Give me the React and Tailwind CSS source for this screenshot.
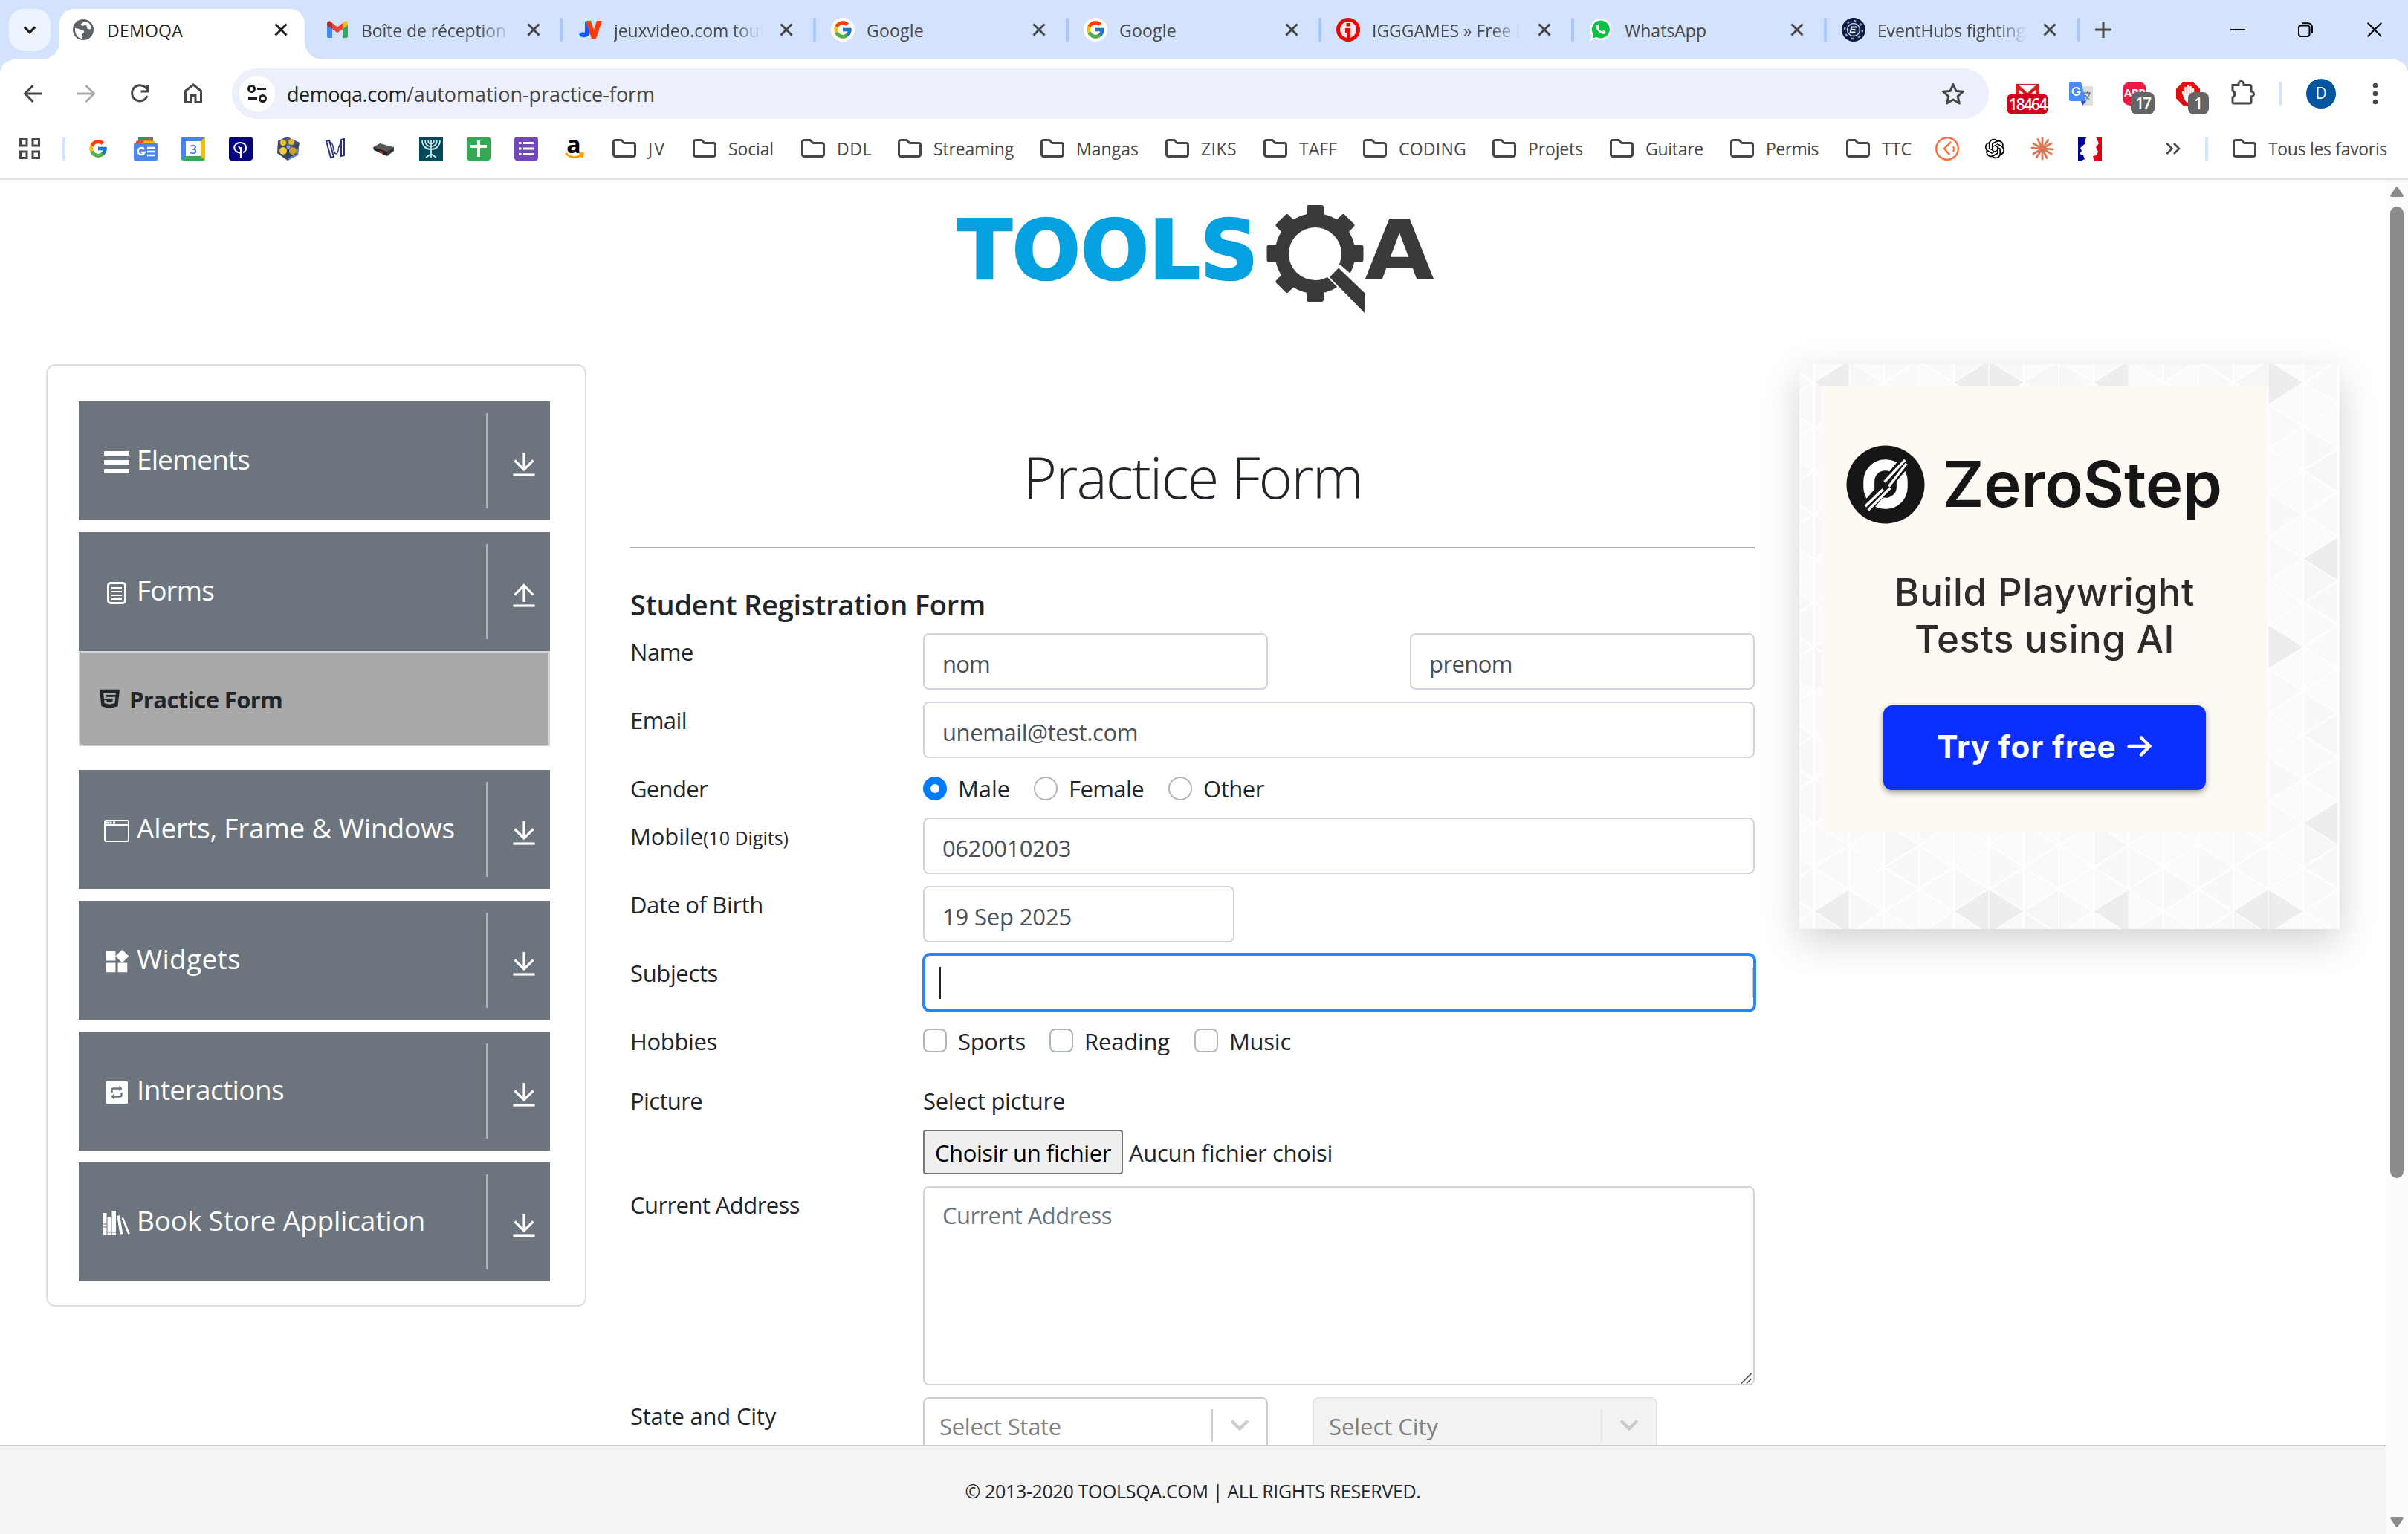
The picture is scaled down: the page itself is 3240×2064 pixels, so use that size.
import React, { useLayoutEffect, useRef, useState } from "react";
import { FcGoogle } from "react-icons/fc";
import { FaWhatsapp, FaHtml5 } from "react-icons/fa";
import { RiOpenaiFill } from "react-icons/ri";
import { MdWidgets } from "react-icons/md";

/* Text that is tracked so that it takes exactly `w` pixels. */
function T({ w, className = "", children }) {
  const ref = useRef(null);
  const [ls, setLs] = useState(0);
  useLayoutEffect(() => {
    const n = String(children).length;
    const fit = () => {
      const el = ref.current;
      if (!el || !w) return;
      el.style.letterSpacing = "0px";
      const v = (w - el.getBoundingClientRect().width) / n;
      el.style.letterSpacing = v + "px";
      setLs(v);
    };
    fit();
    if (document.fonts && document.fonts.ready) document.fonts.ready.then(fit);
  }, [w, children]);
  return (
    <span ref={ref} className={"inline-block whitespace-pre " + className} style={{ letterSpacing: ls + "px" }}>
      {children}
    </span>
  );
}

/* ---------- small icons ---------- */
const Close = ({ className = "" }) => (
  <svg viewBox="0 0 20 20" className={"h-5 w-5 shrink-0 " + className} fill="none" stroke="currentColor" strokeWidth="3">
    <path d="M2.500 2.500l15 15M17.500 2.500l-15 15" />
  </svg>
);
const Globe = () => (
  <svg viewBox="0 0 28 28" className="h-7 w-7 shrink-0">
    <circle cx="14" cy="14" r="14" fill="#5f6368" />
    <path d="M3 12c4 0 6 2 9 2 2 0 3 1 3 3s-3 2-3 4 1 3 1 5c-6 0-10.500-6-10-14zM15 3c-1 2-4 2-4 4s3 2 5 1 3 1 3 3 3 3 6 2c0-6-4-10-10-10z" fill="#fff" />
  </svg>
);
const Gmail = () => (
  <svg viewBox="0 0 32 32" className="h-8 w-8 shrink-0">
    <path d="M2 8v17a2 2 0 0 0 2 2h5V14z" fill="#4285f4" />
    <path d="M30 8v17a2 2 0 0 1-2 2h-5V14z" fill="#34a853" />
    <path d="M23 7v8l7-5V8c0-3-3-4.500-5.500-2.500z" fill="#fbbc04" />
    <path d="M9 15V7l7 5.500L23 7v8l-7 5.300z" fill="#ea4335" />
    <path d="M2 8v2l7 5V7L7.500 5.500C5 3.500 2 5 2 8z" fill="#c5221f" />
  </svg>
);
const JVIcon = () => (
  <svg viewBox="0 0 32 32" className="h-8 w-8 shrink-0">
    <path d="M9 5h7v13a8 8 0 0 1-15 4l5-3c2 2 3 1 3-1z" fill="#0a5cff" />
    <path d="M10 4h7l4 12 4-12h7l-8 24h-6z" fill="#ff3c00" />
  </svg>
);
const GoogleDisc = () => (
  <span className="flex h-8 w-8 shrink-0 items-center justify-center rounded-full bg-white">
    <FcGoogle className="h-7 w-7" />
  </span>
);
const Igg = () => (
  <svg viewBox="0 0 32 32" className="h-8 w-8 shrink-0">
    <circle cx="16" cy="16" r="13.500" fill="#f6e9f2" stroke="#f40000" strokeWidth="5" />
    <path d="M12 14h7v18h-5v-12h-2z" fill="#f40000" />
    <path d="M13.500 7h5v4.500h-5z" fill="#f40000" />
  </svg>
);
const Whats = () => (
  <svg viewBox="0 0 32 32" className="h-8 w-8 shrink-0">
    <path d="M16 1a14.500 14.500 0 1 1-7 27.200L1 31l2.500-7.500A14.500 14.500 0 0 1 16 1z" fill="#fff" />
    <path d="M16 3.500a12 12 0 1 1-6 22.500l-5.500 1.500L6 22.200A12 12 0 0 1 16 3.500z" fill="#0bc144" />
    <path d="M11 9.500c1-1 2-.6 2.400.5l.8 2c.3.9-1 1.600-1 2.300.8 2 2.700 3.500 4.400 4.200.7 0 1.200-1.700 2.100-1.400l2.300 1.200c.8.400.5 2.200-.5 2.900-3 2-11-2.600-11.700-8.300-.1-1.500.4-2.500 1.200-3.400z" fill="#fff" />
  </svg>
);
const Hubs = () => (
  <svg viewBox="0 0 32 32" className="h-8 w-8 shrink-0">
    <circle cx="16" cy="16" r="16" fill="#0d1b40" />
    <circle cx="16" cy="16" r="12" fill="none" stroke="#8ea2c8" strokeWidth="2.500" strokeDasharray="3 6.400" />
    <circle cx="16" cy="16" r="8.500" fill="#16264f" stroke="#c9d4ea" strokeWidth="1.500" />
    <path d="M20 12.500h-6.500l-1 3.500h6M12.500 16l-1 3.500h7" stroke="#e6ecf8" strokeWidth="1.800" fill="none" />
  </svg>
);
const Folder = () => (
  <svg viewBox="0 0 32 26" className="h-[26px] w-8 shrink-0" fill="none" stroke="#474747" strokeWidth="3">
    <path d="M1.500 4a2.500 2.500 0 0 1 2.500-2.500h8l4 4h12A2.500 2.500 0 0 1 30.500 8v13a2.500 2.500 0 0 1-2.500 2.500H4A2.500 2.500 0 0 1 1.500 21z" />
  </svg>
);

/* ---------- tab strip ---------- */
const tabs = [
  { t: "Boîte de réception", w: 195, icon: <Gmail />, fade: true },
  { t: "jeuxvideo.com tout", w: 204, icon: <JVIcon />, fade: true, sep: true },
  { t: "Google", w: 77, icon: <GoogleDisc />, sep: true },
  { t: "Google", w: 77, icon: <GoogleDisc />, sep: true },
  { t: "IGGGAMES » Free D", w: 210, icon: <Igg />, fade: true, sep: true },
  { t: "WhatsApp", w: 110, icon: <Whats />, sep: true },
  { t: "EventHubs fighting", w: 199, icon: <Hubs />, fade: true, sep: true },
];

function Tab({ t, w, icon, fade, sep }) {
  return (
    <div className="flex w-[340px] shrink-0 items-center">
      <span className={"h-8 w-1 rounded-full " + (sep ? "bg-[#a8c7fa]" : "")} />
      <span className="ml-5 flex">{icon}</span>
      <span
        className={
          "ml-4 w-[200px] overflow-hidden whitespace-nowrap pt-[2px] text-[23px] leading-8 text-[#474747] " +
          (fade ? "[mask-image:linear-gradient(to_right,black_80%,transparent)]" : "")
        }
      >
        <T w={w}>{t}</T>
      </span>
      <Close className="ml-[22px] text-[#474747]" />
    </div>
  );
}

function TabStrip() {
  return (
    <div className="flex h-20 items-stretch bg-[#d3e2fd]">
      <div className="ml-3 mt-3 flex h-14 w-14 shrink-0 items-center justify-center rounded-[20px] bg-[#ecf2fe]">
        <svg viewBox="0 0 20 12" className="h-3 w-[18px]" fill="none" stroke="#1f1f1f" strokeWidth="3.600">
          <path d="M2 2l8 8 8-8" />
        </svg>
      </div>
      <div className="relative ml-3 mt-3 flex w-[330px] shrink-0 items-center rounded-t-[20px] bg-white pb-3">
        <svg viewBox="0 0 24 24" className="absolute -left-6 bottom-0 h-6 w-6" fill="#fff"><path d="M24 0v24H0A24 24 0 0 0 24 0z" /></svg>
        <svg viewBox="0 0 24 24" className="absolute -right-6 bottom-0 h-6 w-6" fill="#fff"><path d="M0 0v24h24A24 24 0 0 1 0 0z" /></svg>
        <span className="ml-[18px]"><Globe /></span>
        <span className="ml-[18px] w-[224px] pt-[2px] text-[23px] leading-8 text-[#1f1f1f]"><T w={102}>DEMOQA</T></span>
        <Close className="text-[#1f1f1f]" />
      </div>
      <div className="ml-1 flex">
        {tabs.map((x, i) => <Tab key={i} {...x} />)}
      </div>
      <div className="flex grow items-center">
        <span className="h-8 w-1 rounded-full bg-[#a8c7fa]" />
        <svg viewBox="0 0 22 22" className="ml-[21px] h-[22px] w-[22px]" stroke="#474747" strokeWidth="3"><path d="M11 0v22M0 11h22" /></svg>
        <svg viewBox="0 0 20 20" className="ml-[160px] h-5 w-5" stroke="#000" strokeWidth="2"><path d="M0 10h20" /></svg>
        <svg viewBox="0 0 20 20" className="ml-[71px] h-5 w-5" fill="none" stroke="#000" strokeWidth="2">
          <rect x="1" y="4.500" width="14.500" height="14.500" rx="3" />
          <path d="M5 1.200h8.500a5.500 5.500 0 0 1 5.500 5.500V15" />
        </svg>
        <svg viewBox="0 0 20 20" className="ml-[73px] h-5 w-5" stroke="#000" strokeWidth="2"><path d="M.7.7l18.600 18.600M19.300.7L.7 19.300" /></svg>
      </div>
    </div>
  );
}

/* ---------- toolbar ---------- */
function Badge({ children, className }) {
  return (
    <span className={"absolute flex h-7 items-center justify-center overflow-hidden rounded-lg text-[21px] font-semibold leading-7 text-white " + className}>
      {children}
    </span>
  );
}

function Toolbar() {
  return (
    <div className="bg-[#d3e2fd]">
      <div className="flex h-[92px] items-start rounded-t-[20px] bg-white pt-3">
        <div className="flex h-[68px] w-[312px] shrink-0 items-center pl-[30px] text-[#474747]">
          <svg viewBox="0 0 28 28" className="h-7 w-7" fill="none" stroke="currentColor" strokeWidth="3"><path d="M26 14H4M14.500 3L3.500 14l11 11" /></svg>
          <svg viewBox="0 0 28 28" className="ml-11 h-7 w-7 text-[#acacac]" fill="none" stroke="currentColor" strokeWidth="3"><path d="M2 14h22M13.500 3l11 11-11 11" /></svg>
          <svg viewBox="0 0 28 28" className="ml-11 h-7 w-7" fill="none" stroke="currentColor" strokeWidth="3"><path d="M22.500 7A10.500 10.500 0 1 0 24 17M24.500 2v9h-9" /></svg>
          <svg viewBox="0 0 28 28" className="ml-11 h-7 w-7" fill="none" stroke="currentColor" strokeWidth="3"><path d="M3.500 10.500L14 2l10.500 8.500v15H17v-9h-6v9H3.500z" /></svg>
        </div>
        <div className="flex h-[68px] w-[2364px] items-center rounded-full bg-[#ecf0fa]">
          <span className="ml-[10px] flex h-12 w-12 items-center justify-center rounded-full bg-white">
            <svg viewBox="0 0 26 24" className="h-6 w-[26px]" fill="none" stroke="#1f1f1f" strokeWidth="3">
              <circle cx="5.500" cy="5.500" r="4" /><path d="M13 5.500h12M1 18.500h12" /><circle cx="20.500" cy="18.500" r="4" />
            </svg>
          </span>
          <span className="ml-[16px] grow pt-[1px] text-[27px] leading-9 text-[#474747]">
            <T w={161} className="text-[#1f1f1f]">demoqa.com</T>
            <T w={334}>/automation-practice-form</T>
          </span>
          <svg viewBox="0 0 32 30" className="mr-[32px] h-[30px] w-8" fill="none" stroke="#474747" strokeWidth="3" strokeLinejoin="round">
            <path d="M16 2.500l3.900 8.900 9.600.8-7.300 6.400 2.200 9.400L16 23l-8.400 5 2.200-9.400-7.300-6.400 9.600-.8z" />
          </svg>
        </div>
        <div className="flex h-[68px] items-center">
          <span className="relative ml-[36px] block h-8 w-8">
            <svg viewBox="0 0 32 32" className="h-8 w-8"><rect y="1" width="32" height="30" fill="#f2f2f2" /><path d="M0 3h32v25h-5V11L16 20 5 11v17H0z" fill="#d41f1f" /><path d="M4 4h24L16 15z" fill="#fff" /></svg>
            <Badge className="-left-3 top-4 w-14 bg-[#d1001f]"><T w={51}>18464</T></Badge>
          </span>
          <span className="relative ml-10 block h-8 w-8">
            <svg viewBox="0 0 32 32" className="h-8 w-8">
              <path d="M12 6h18a2 2 0 0 1 2 2v22a2 2 0 0 1-2 2H17z" fill="#dfdfdf" />
              <path d="M2 0h14l7 26H2a2 2 0 0 1-2-2V2a2 2 0 0 1 2-2z" fill="#4a8cf5" /><path d="M16 26h7l-5 6z" fill="#2557c4" />
              <path d="M14 10.500A5 5 0 1 0 14.500 14H10" stroke="#fff" strokeWidth="2" fill="none" />
              <path d="M20 15h9M24.500 13v2M28 15c-1 4-3 6-5 8M22 18c1 3 3 4 5 6" stroke="#6a7a90" strokeWidth="1.500" fill="none" />
            </svg>
          </span>
          <span className="relative ml-10 flex h-8 w-8 items-center justify-center rounded-[10px] bg-[#ed1944] text-[15px] font-bold leading-none text-white">
            <T w={28} className="pb-1">ABP</T>
            <Badge className="left-[11px] top-[14px] h-[30px] w-8 bg-[#646464]"><T w={20}>17</T></Badge>
          </span>
          <span className="relative ml-10 block h-8 w-8">
            <svg viewBox="0 0 32 32" className="h-8 w-8"><path d="M9.500 0h13L32 9.500v13L22.500 32h-13L0 22.500v-13z" fill="#e40d0d" /><path d="M9 14l3 8M12.500 20V8M16 20V5.500M19.500 20V7M23 20V10" stroke="#fff" strokeWidth="2.600" strokeLinecap="round" fill="none" /><path d="M10 17h14v5c0 4-3 6-7 6s-5-3-7-8z" fill="#fff" /></svg>
            <Badge className="left-[16px] top-[14px] h-[30px] w-7 bg-[#646464]">1</Badge>
          </span>
          <svg viewBox="0 0 34 34" className="-mt-1 ml-[41px] h-[34px] w-[34px]" fill="none" stroke="#474747" strokeWidth="3">
            <path d="M3 7.500h8V6a3.500 3.500 0 0 1 7 0v1.500h8a2 2 0 0 1 2 2V16a3.500 3.500 0 0 1 0 7v7a2 2 0 0 1-2 2H5a2 2 0 0 1-2-2v-6a5 5 0 0 0 0-9z" />
          </svg>
          <span className="ml-[31px] h-8 w-1 rounded-full bg-[#d3e2fd]" />
          <span className="ml-[33px] flex h-10 w-10 items-center justify-center rounded-full bg-[#00569e] text-[21px] text-white">D</span>
          <svg viewBox="0 0 8 30" className="ml-[49px] h-[30px] w-2" fill="#474747"><circle cx="4" cy="4" r="3.300" /><circle cx="4" cy="15" r="3.300" /><circle cx="4" cy="26" r="3.300" /></svg>
        </div>
      </div>
    </div>
  );
}

/* ---------- bookmarks ---------- */
const marks = [
  <FcGoogle className="h-7 w-7" />,
  <svg viewBox="0 0 32 32" className="h-8 w-8"><path d="M6 0h20v8H6z" fill="#2e9a52" /><path d="M3 6l20-4 4 8H3z" fill="#e94235" /><path d="M14 5l14 1v4H10z" fill="#fbbc04" /><rect y="8" width="32" height="24" rx="2" fill="#4a86e8" /><path d="M14 17a4.500 4.500 0 1 0 .5 4H10M18 15h10M18 20h10M18 25h10" stroke="#fff" strokeWidth="2.400" fill="none" /></svg>,
  <span className="flex h-8 w-8 items-center justify-center rounded-[3px] border-[6px] border-t-[#4285f4] border-r-[#fbbc04] border-b-[#34a853] border-l-[#4285f4] bg-white text-[17px] font-semibold leading-none text-[#3f77d8]">3</span>,
  <svg viewBox="0 0 32 32" className="h-8 w-8"><rect width="32" height="32" rx="4" fill="#06067c" /><path d="M16 28V14M16 22c-13-2-10-14-1-14 10 0 10 12 4 13M13 13c2 2 4 5 4 10" stroke="#fff" strokeWidth="2" fill="none" /></svg>,
  <svg viewBox="0 0 32 32" className="h-8 w-8"><path d="M14 0l17 8-3 17-13 7L1 22 2 6z" fill="#3a4560" /><path d="M2 6L14 0l17 8-15 7z" fill="#4d5c7d" /><circle cx="9" cy="8" r="4" fill="#e8c334" /><circle cx="20" cy="7" r="4" fill="#e3b52a" /><circle cx="9" cy="19" r="5" fill="#f0c93c" /><circle cx="22" cy="19" r="5" fill="#caa12c" /><circle cx="16" cy="14" r="2.500" fill="#7fa6dd" /><path d="M16 30l12-6 1-8" stroke="#5a89cf" strokeWidth="2.500" fill="none" /></svg>,
  <svg viewBox="0 0 32 32" className="h-8 w-8" fill="none" stroke="#2b357f"><path d="M3 6l4-1 6 22-4 1zM23 4l4-1v22l-4 1z" strokeWidth="2" /><path d="M8 7c7 3 2 12 8 16 5 0 1-9 7-15" strokeWidth="1.400" /></svg>,
  <svg viewBox="0 0 32 32" className="h-8 w-8"><path d="M2 14l9-5 19 5-8 8z" fill="#585858" /><path d="M2 14l19 6v6L3 18z" fill="#222" /><path d="M21 20l9-6v5l-9 7z" fill="#3a3a3a" /><path d="M10 19l5 1v4z" fill="#e03020" /></svg>,
  <svg viewBox="0 0 32 32" className="h-8 w-8"><path d="M0 0h32v32H0z" fill="#02495a" /><path d="M16 4v24M4 5c0 16 24 16 24 0M8 5c0 11 16 11 16 0M12 5c0 6 8 6 8 0M9 28l7-5 7 5" stroke="#d9ecef" strokeWidth="1.700" fill="none" /></svg>,
  <svg viewBox="0 0 32 32" className="h-8 w-8"><rect width="32" height="32" rx="4" fill="#34a853" /><path d="M16 5v22M5 13h22" stroke="#fff" strokeWidth="4" /></svg>,
  <svg viewBox="0 0 32 32" className="h-8 w-8"><rect width="32" height="32" rx="4" fill="#7248b9" /><path d="M12 8.500h14M12 16h14M12 23.500h14M6 8.500h3.500M6 16h3.500M6 23.500h3.500" stroke="#fff" strokeWidth="3.200" /></svg>,
  <span className="relative flex h-8 w-8 justify-center text-[32px] font-bold leading-[20px] text-black">a<svg viewBox="0 0 26 9" className="absolute bottom-0.5 left-1 h-[9px] w-[26px]" fill="none" stroke="#ff9900" strokeWidth="2.600"><path d="M1 1c7 7 16 7 22 2M19 1.500h5.500L23 7" /></svg></span>,
];

const folders = [
  ["JV", 108, 24], ["Social", 146, 61], ["DDL", 130, 47], ["Streaming", 192, 108], ["Mangas", 168, 84], ["ZIKS", 132, 48],
  ["TAFF", 134, 51], ["CODING", 174, 91], ["Projets", 158, 74], ["Guitare", 162, 78], ["Permis", 156, 71], ["TTC", 120, 40],
];

const rays = Array.from({ length: 12 }, (_, i) => i * 30 + (i % 2 ? 4 : 0));

function Bookmarks() {
  return (
    <div className="flex h-[70px] items-start border-b-2 border-[#e1e1e1] bg-white pt-[8px]">
      <div className="flex h-10 w-full items-center">
        <svg viewBox="0 0 28 28" className="ml-[26px] h-7 w-7 shrink-0" fill="none" stroke="#474747" strokeWidth="3">
          <path d="M1.500 1.500h8.500v8.500H1.500zM18 1.500h8.500v8.500H18zM1.500 18h8.500v8.500H1.500zM18 18h8.500v8.500H18z" />
        </svg>
        <span className="ml-[30px] h-8 w-1 rounded-full bg-[#d3e2fd]" />
        <div className="ml-[12px] flex">
          {marks.map((m, i) => <span key={i} className="flex h-8 w-16 items-center justify-center">{m}</span>)}
        </div>
        <div className="ml-[20px] flex text-[23px] leading-8 text-[#474747]">
          {folders.map(([t, w, tw]) => (
            <span key={t} className="flex shrink-0 items-center gap-4" style={{ width: w }}><Folder /><T w={tw}>{t}</T></span>
          ))}
        </div>
        <div className="flex items-center gap-8">
          <svg viewBox="0 0 32 32" className="h-8 w-8" fill="none" stroke="#ff6c37"><circle cx="16" cy="16" r="14.800" strokeWidth="2.400" /><path d="M21 7l-9 9 7 8" strokeWidth="2.400" /><path d="M24 13c1 2 1 5 0 7" strokeWidth="2" /></svg>
          <RiOpenaiFill className="h-8 w-8 text-black" />
          <svg viewBox="0 0 32 32" className="h-8 w-8" stroke="#d97757" strokeWidth="2.800" strokeLinecap="round">
            {rays.map((a) => <path key={a} d="M16 14V2" transform={`rotate(${a} 16 16)`} />)}
          </svg>
          <svg viewBox="0 0 32 32" className="h-8 w-8"><path d="M0 0h32v32H0z" fill="#fff" /><path d="M0 0h12l-3 5 1 4-7 6 2 4-3 4 5 2 2 5-4 2H0z" fill="#000091" /><path d="M24 0h8v32H22l-2-6 5-1 2-5-3-6 4-5z" fill="#e1000f" /></svg>
        </div>
        <svg viewBox="0 0 20 16" className="ml-[86px] h-4 w-5" fill="none" stroke="#474747" strokeWidth="2.600"><path d="M1.500 1l7 7-7 7M11 1l7 7-7 7" /></svg>
        <span className="ml-[33px] h-8 w-1 rounded-full bg-[#d3e2fd]" />
        <span className="ml-[33px] flex items-center gap-4 text-[23px] leading-8 text-[#474747]"><Folder /><T w={160}>Tous les favoris</T></span>
      </div>
    </div>
  );
}

/* ---------- page: logo ---------- */
const teeth = [0, 45, 90, 180, 225, 270, 315];
function Logo() {
  return (
    <svg viewBox="0 0 700 200" className="h-[200px] w-[700px]">
      <text x="28" y="125" fontFamily="DejaVu Sans" fontWeight="700" fontSize="110" fill="#03a1e0" stroke="#03a1e0" strokeWidth="2.500" textLength="405" lengthAdjust="spacingAndGlyphs">TOOLS</text>
      <g fill="#3a3a3a">
        <path fillRule="evenodd" d="M509.500 37a54 54 0 1 1 0 108 54 54 0 0 1 0-108zm0 19a35.500 35.500 0 1 0 0 71 35.500 35.500 0 0 0 0-71z" />
        {teeth.map((a) => (
          <path key={a} d="M495 44c2-4 3-4 3-8v-7a3 3 0 0 1 3-3h17a3 3 0 0 1 3 3v7c0 4 1 4 3 8z" transform={`rotate(${a} 509.500 91)`} />
        ))}
        <path d="M524 124l19-18 40 34v40l-60-60z" fill="#fff" />
        <path d="M541 110.500l35 33.500v27l-47-48z" />
      </g>
      <text x="576" y="126" fontFamily="DejaVu Sans" fontWeight="700" fontSize="112" fill="#3a3a3a" textLength="94" lengthAdjust="spacingAndGlyphs">A</text>
    </svg>
  );
}

/* ---------- page: side menu ---------- */
const IconBars = () => (
  <svg viewBox="0 0 34 30" className="h-[30px] w-[34px]" fill="#fff"><rect width="34" height="6" rx="1" /><rect y="12" width="34" height="6" rx="1" /><rect y="24" width="34" height="6" rx="1" /></svg>
);
const IconForm = () => (
  <svg viewBox="0 0 26 30" className="h-[30px] w-[26px]" fill="none" stroke="#fff"><rect x="1.500" y="1.500" width="23" height="27" rx="3.500" strokeWidth="3" /><path d="M6 8h14M6 13h14M6 18h14M6 23h14" strokeWidth="2" /></svg>
);
const IconWindow = () => (
  <svg viewBox="0 0 34 30" className="h-[30px] w-[34px]" fill="none" stroke="#fff" strokeWidth="2"><rect x="1" y="1" width="32" height="28" rx="2" /><path d="M1 7h32" /><path d="M3 4h13" strokeWidth="3" strokeDasharray="3 1.500" /></svg>
);
const IconRepeat = () => (
  <svg viewBox="0 0 30 30" className="h-[30px] w-[30px]"><rect width="30" height="30" rx="1.500" fill="#fff" /><path d="M8.500 15v-3.500a2 2 0 0 1 2-2H20M21.500 15v3.500a2 2 0 0 1-2 2H10" fill="none" stroke="#6c757d" strokeWidth="2.400" /><path d="M18.500 5.500l4 4-4 4zM11.500 16.500l-4 4 4 4z" fill="#6c757d" /></svg>
);
const IconBooks = () => (
  <svg viewBox="0 0 36 33" className="h-[33px] w-9" fill="#fff">
    <path d="M0 3h4.500v30H0zM5.500 8h5v25h-5zM11.500 0h5.500v33h-5.500z" /><path d="M18.500 7l3.500-.7L26.500 32l-4 .7zM24.500 10l2.500-1L36 31l-2.500 1.500z" />
    <path d="M0 18h4.500M0 22h4.500M5.500 29h5M11.500 29h5.500M14.500 3v24" stroke="#6c757d" />
  </svg>
);
const Arrow = ({ up }) => (
  <svg viewBox="0 0 30 32" className="h-8 w-[30px]" fill="none" stroke="#fff" strokeWidth="3.200">
    <path d={up ? "M15 25V3M2.500 15.500L15 2.500l12.500 13" : "M15 0v23M2.500 10.500L15 23l12.500-12.500"} />
    <path d="M.5 30h29" />
  </svg>
);

function MenuItem({ icon, label, w, up, className = "" }) {
  return (
    <div className={"flex h-40 items-center bg-[#6c757d] text-white " + className}>
      <span className="ml-[33px] flex w-[36px] justify-center pt-[3px]">{icon}</span>
      <span className="ml-[9px] grow pb-[4px] text-[37px] leading-[48px]"><T w={w}>{label}</T></span>
      <span className="h-32 w-[2px] bg-[#b2b2b2]" />
      <span className="flex w-[84px] justify-center pl-[14px] pt-[9px]"><Arrow up={up} /></span>
    </div>
  );
}

function Sidebar() {
  return (
    <nav className="ml-[62px] h-[1268px] w-[727px] shrink-0 rounded-xl border-2 border-[#dedede] pl-[42px] pr-[47px] pt-12">
      <MenuItem icon={<IconBars />} label="Elements" w={152} />
      <MenuItem icon={<IconForm />} label="Forms" w={104} up className="mt-4" />
      <div className="flex h-32 items-center border-2 border-[#ced4da] bg-[#a9a9a9] text-[#212529]">
        <FaHtml5 preserveAspectRatio="none" className="ml-[26px] h-[29px] w-[27px]" />
        <span className="ml-[13px] pt-[2px] text-[31px] font-bold leading-[48px]"><T w={206}>Practice Form</T></span>
      </div>
      <MenuItem icon={<IconWindow />} label="Alerts, Frame & Windows" w={428} className="mt-8" />
      <MenuItem icon={<MdWidgets className="h-[38px] w-[38px] shrink-0" />} label="Widgets" w={140} className="mt-4" />
      <MenuItem icon={<IconRepeat />} label="Interactions" w={198} className="mt-4" />
      <MenuItem icon={<IconBooks />} label="Book Store Application" w={388} className="mt-4" />
    </nav>
  );
}

/* ---------- page: form ---------- */
function Row({ label, w, h, small, children }) {
  return (
    <div className="flex items-start" style={{ height: h }}>
      <div className="w-[394px] shrink-0 pt-[1px]">
        <T w={w}>{label}</T>
        {small && <T w={115} className="text-[25px]">{small}</T>}
      </div>
      {children}
    </div>
  );
}
const Field = ({ className = "", w, children }) => (
  <div className={"flex h-[76px] items-center rounded-lg border-2 border-[#ced4da] bg-white pl-[24px] pt-[5px] text-[#495057] " + className}>
    <T w={w}>{children}</T>
  </div>
);
const Radio = ({ label, w, on, className }) => (
  <div className={"flex items-center gap-[15px] " + className}>
    <span className={"flex h-8 w-8 shrink-0 items-center justify-center rounded-full " + (on ? "bg-[#007bff]" : "border-2 border-[#adb5bd]")}>
      {on && <span className="h-3 w-3 rounded-full bg-white" />}
    </span>
    <T w={w} className="pt-[1px]">{label}</T>
  </div>
);
const Check = ({ label, w, className }) => (
  <div className={"flex items-center gap-[15px] " + className}>
    <span className="-mt-[1px] h-8 w-8 shrink-0 rounded-lg border-2 border-[#adb5bd]" />
    <T w={w} className="pt-[1px]">{label}</T>
  </div>
);
function Select({ label, w, disabled }) {
  return (
    <div className={"flex h-[76px] w-[464px] shrink-0 items-center rounded-lg border-2 pl-5 text-[#808080] " + (disabled ? "border-[#e6e6e6] bg-[#f2f2f2]" : "border-[#ccc] bg-white")}>
      <span className="grow pt-[2px]"><T w={w}>{label}</T></span>
      <span className={"h-11 w-[2px] " + (disabled ? "bg-[#e6e6e6]" : "bg-[#ccc]")} />
      <svg viewBox="0 0 24 16" className="mx-[24px] h-4 w-6" fill="none" stroke="#ccc" strokeWidth="4.500" strokeLinecap="round" strokeLinejoin="round"><path d="M2.500 3L12 12.500 21.500 3" /></svg>
    </div>
  );
}

function Form() {
  return (
    <main className="ml-[59px] w-[1513px] shrink-0 pt-[103px] text-[#212529]">
      <h1 className="text-center text-[78px] font-light leading-[96px]"><T w={456}>Practice Form</T></h1>
      <div className="mt-[47px] h-[2px] bg-[#adadad]" />
      <h5 className="mt-[51px] text-[38px] font-semibold leading-[48px]"><T w={478}>Student Registration Form</T></h5>
      <div className="mt-[15px] text-[31px] leading-[48px]">
        <Row label="Name" w={85} h={92}>
          <Field className="w-[464px]" w={64}>nom</Field>
          <Field className="ml-[191px] w-[464px]" w={112}>prenom</Field>
        </Row>
        <Row label="Email" w={76} h={92}><Field className="grow" w={263}>unemail@test.com</Field></Row>
        <Row label="Gender" w={104} h={64}>
          <Radio label="Male" w={70} on className="w-[149px]" />
          <Radio label="Female" w={101} className="w-[181px]" />
          <Radio label="Other" w={82} />
        </Row>
        <Row label="Mobile" small="(10 Digits)" w={98} h={92}><Field className="grow" w={173}>0620010203</Field></Row>
        <Row label="Date of Birth" w={179} h={92}><Field className="w-[419px]" w={174}>19 Sep 2025</Field></Row>
        <Row label="Subjects" w={118} h={92}>
          <div className="-ml-[1px] -mr-[2px] -mt-[2px] flex h-20 grow items-center justify-between rounded-[10px] border-4 border-[#2684ff] pl-[19px]">
            <span className="h-[43px] w-[2px] bg-[#212529]" />
            <span className="h-10 w-[2px] bg-[#ccc]" />
          </div>
        </Row>
        <Row label="Hobbies" w={117} h={80}>
          <Check label="Sports" w={91} className="w-[170px]" />
          <Check label="Reading" w={115} className="w-[195px]" />
          <Check label="Music" w={83} />
        </Row>
        <Row label="Picture" w={97} h={140}>
          <div>
            <T w={191} className="pt-[1px]">Select picture</T>
            <div className="mt-[15px] flex items-center">
              <span className="flex h-[60px] items-center rounded-[4px] border-2 border-[#767676] bg-[#efefef] px-[14px] pt-[2px] text-black"><T w={237}>Choisir un fichier</T></span>
              <span className="ml-2 pt-[2px]"><T w={274}>Aucun fichier choisi</T></span>
            </div>
          </div>
        </Row>
        <Row label="Current Address" w={228} h={284}>
          <div className="flex h-[268px] grow items-start justify-between rounded-lg border-2 border-[#ced4da] pl-[24px] text-[#6c757d]">
            <T w={228} className="mt-[13px]">Current Address</T>
            <svg viewBox="0 0 14 14" className="mr-[2px] h-3.5 w-3.5 self-end" stroke="#555" strokeWidth="1.600"><path d="M0 13.500L13.500 0M7 13.500l6.500-6.500" /></svg>
          </div>
        </Row>
        <Row label="State and City" w={196} h={84}>
          <Select label="Select State" w={164} />
          <span className="w-[60px]" />
          <Select label="Select City" w={147} disabled />
        </Row>
      </div>
    </main>
  );
}

/* ---------- page: ad ---------- */
const tris = [];
for (let k = -1; k < 17; k++) {
  for (let n = -1; n < 14; n++) {
    const x = 20 + k * 47;
    const y = 24.6 + n * 59.3 + (k % 2 ? 29.65 : 0);
    tris.push([`M${x} ${y}v59.300l47-29.650z`, (k * 7 + n * 13 + k * n * 3 + 200) % 6]);
    tris.push([`M${x} ${y}l47 29.650v-59.300z`, (k * 5 + n * 11 + k * n + 200) % 6]);
  }
}
/* Filled cells: column, vertex row, and which way the triangle points. */
const dark = [
  [0, 0, "l"], [4, 0, "l"], [5, 0, "r"], [8, 0, "l"], [13, 0, "r"],
  [0, 12, "l"], [4, 12, "l"], [5, 12, "r"], [8, 12, "l"], [12, 12, "l"], [13, 12, "r"],
  [14, 4, "l"], [13, 6, "r"], [14, 10, "l"],
];
const shades = ["#fafafa", "#fbfbfb", "#f6f6f6", "#f9f9f9", "#fbfbfb", "#f8f8f8"];

function Ad() {
  return (
    <aside className="relative ml-[60px] h-[760px] w-[727px] shrink-0 shadow-[0_16px_48px_rgba(0,0,0,0.175)]">
      <svg viewBox="0 0 727 760" className="absolute inset-0 h-[760px] w-[727px] bg-[#f9f9f9]">
        {tris.map(([d, s], i) => <path key={i} d={d} fill={shades[s]} stroke="#fff" strokeWidth="2" />)}
        {dark.map(([k, n, dir], i) => {
          const x = 20 + k * 47;
          const y = 24.6 + n * 59.3;
          const d = dir === "l" ? `M${x} ${y}l47-29.650v59.300z` : `M${x + 47} ${y}l-47-29.650v59.300z`;
          return <path key={i} d={d} fill="#ededed" stroke="#fdfdfd" />;
        })}
      </svg>
      <div className="relative ml-[30px] flex h-[630px] w-[600px] flex-col items-center pt-[30px] font-['Inter']">
        <div className="flex h-[600px] w-full flex-col items-center bg-[#fef9f2]">
          <div className="mt-[78px] flex h-[107px] w-full items-center pl-[33px]">
            <svg viewBox="0 0 107 107" className="h-[106px] w-[106px] shrink-0">
              <circle cx="53.500" cy="53.500" r="53" fill="#161616" />
              <rect x="31" y="27" width="45" height="52" rx="22" fill="none" stroke="#fff" strokeWidth="15" />
              <path d="M22 92L84 18" stroke="#161616" strokeWidth="16" />
              <path d="M26 83L50 60M30 88L60 58M52 50L80 20M58 56L82 25" stroke="#fff" strokeWidth="3.500" />
            </svg>
            <span className="ml-[24px] text-[85px] font-semibold leading-[107px] text-[#161616]"><T w={376}>ZeroStep</T></span>
          </div>
          <div className="mt-[60px] text-center text-[51px] font-medium leading-[63px] text-[#2e2c2a]">
            <T w={404}>Build Playwright</T><br /><T w={350}>Tests using AI</T>
          </div>
          <div className="mt-[58px] flex h-[114px] w-[434px] items-center justify-center rounded-[12px] bg-[#0a2fff] pb-[4px] text-[42px] font-bold text-white shadow-[0_3px_8px_rgba(0,0,0,0.4)]">
            <T w={241}>Try for free</T>
            <svg viewBox="0 0 34 30" className="ml-[14px] h-[30px] w-[34px]" fill="none" stroke="#fff" strokeWidth="4.500" strokeLinecap="round" strokeLinejoin="round"><path d="M2.500 15h28M19 3.500L30.500 15 19 26.500" /></svg>
          </div>
        </div>
      </div>
    </aside>
  );
}

export default function App() {
  return (
    <div className="flex h-[2064px] w-[3240px] flex-col overflow-hidden bg-white font-['Open_Sans',sans-serif]">
      <TabStrip />
      <Toolbar />
      <Bookmarks />
      <div className="flex h-[1822px]">
        <div className="flex w-[3210px] flex-col">
          <div className="h-[1702px] overflow-hidden">
            <div className="flex h-[248px] pl-[1260px] pt-2"><Logo /></div>
            <div className="flex items-start">
              <Sidebar />
              <Form />
              <Ad />
            </div>
          </div>
          <footer className="flex h-[120px] items-center justify-center border-t-2 border-[#ccc] bg-[#f4f4f4] pt-[2px] text-[25px] leading-8 text-[#212529]">
            <T w={613}>© 2013-2020 TOOLSQA.COM | ALL RIGHTS RESERVED.</T>
          </footer>
        </div>
        <div className="flex w-[30px] flex-col items-center bg-[#fcfcfc] pt-[9px]">
          <svg viewBox="0 0 18 14" className="h-3.5 w-[18px]" fill="#8b8b8b"><path d="M7.500 1a2 2 0 0 1 3 0l7 10.500a1.600 1.600 0 0 1-1 2.500h-15a1.600 1.600 0 0 1-1-2.500z" /></svg>
          <div className="mt-[13px] h-[1307px] w-[18px] rounded-full bg-[#8b8b8b]" />
          <svg viewBox="0 0 18 14" className="mb-[9px] mt-auto h-3.5 w-[18px] rotate-180" fill="#8b8b8b"><path d="M7.500 1a2 2 0 0 1 3 0l7 10.500a1.600 1.600 0 0 1-1 2.500h-15a1.600 1.600 0 0 1-1-2.500z" /></svg>
        </div>
      </div>
    </div>
  );
}
